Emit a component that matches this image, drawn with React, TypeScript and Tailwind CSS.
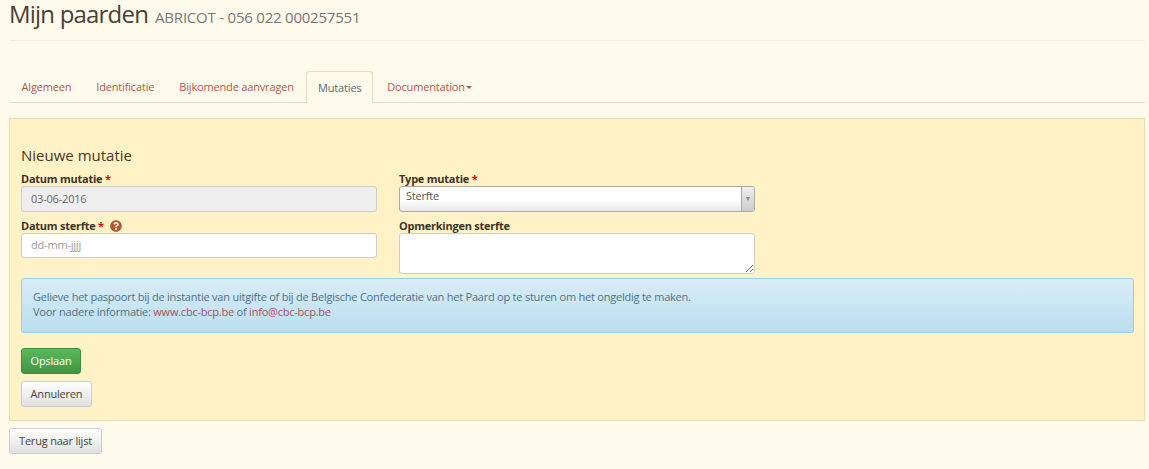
import { FaQuestionCircle } from "react-icons/fa";

const tabs = ["Algemeen", "Identificatie", "Bijkomende aanvragen"];

function Label({ text, required }: { text: string; required?: boolean }) {
  return (
    <span className="text-[11px] leading-[14px] font-bold tracking-[-0.25px] text-[#3d3327]">
      {text}
      {required && <span className="text-[#f00000]"> *</span>}
    </span>
  );
}

export default function App() {
  return (
    <div className="h-[469px] overflow-hidden bg-[#fffbec] pl-[9px] pr-[4px] font-['Open_Sans',sans-serif] tracking-[-0.2px] text-[#555]">
      {/* Header */}
      <div className="h-[41px] border-b border-[#eeeae4] flex items-baseline gap-[7px]">
        <h1 className="text-[24px] leading-[28px] tracking-[-0.8px] font-normal text-[#4a3f35]">Mijn paarden</h1>
        <span className="text-[15px] tracking-[-0.22px] text-[#777]">ABRICOT - 056 022 000257551</span>
      </div>

      {/* Tabs */}
      <div className="mt-[30px] h-[32px] border-b border-[#dfdde0] flex text-[11px] tracking-[-0.17px]">
        {tabs.map((tab) => (
          <span key={tab} className="h-[31px] px-[12.5px] pt-[1px] flex items-center text-[#b5534a]">
            {tab}
          </span>
        ))}
        <span className="h-[32px] w-[67px] pt-[1px] justify-center flex items-center bg-[#fffbec] border border-b-0 border-[#e6dcb8] rounded-t-[3px] text-[#5a6672]">
          Mutaties
        </span>
        <span className="h-[31px] px-[14px] pt-[1px] flex items-center text-[#b5534a]">
          Documentation
          <span className="ml-[1px] mt-[1px] border-x-[3px] border-x-transparent border-t-[3px] border-t-[#b5534a]" />
        </span>
      </div>

      {/* Panel */}
      <div className="mt-[15px] h-[303px] border border-[#ebdcad] bg-[#fff2c6] px-[11px] pt-[27px]">
        <h3 className="text-[15px] leading-[19px] tracking-normal text-[#4a3528]">Nieuwe mutatie</h3>

        <div className="mt-[7px] flex gap-[22px]">
          <div className="w-[356px] flex flex-col">
            <Label text="Datum mutatie" required />
            <div className="h-[26px] flex items-center rounded-[3px] border border-[#ccc] bg-[#eee] px-[9px] text-[11px] text-[#666]">
              03-06-2016
            </div>
            <div className="mt-[7px] h-[14px] flex items-center">
              <Label text="Datum sterfte" required />
              <FaQuestionCircle size={12} className="ml-[6px] text-[#b0563a]" />
            </div>
            <div className="h-[25px] flex items-center rounded-[3px] border border-[#ccc] bg-white px-[9px] text-[11px] text-[#999]">
              dd-mm-jjjj
            </div>
          </div>
          <div className="w-[356px] flex flex-col">
            <Label text="Type mutatie" required />
            <div className="h-[26px] flex rounded-[3px] border border-[#aaa] bg-gradient-to-b from-white from-50% to-[#e8e8e8] text-[11px] text-[#555] overflow-hidden">
              <span className="flex-1 pl-[6px] pt-[1px] leading-[15px]">Sterfte</span>
              <span className="w-[13px] flex items-center justify-center border-l border-[#aaa] bg-gradient-to-b from-[#eee] to-[#ccc]">
                <span className="border-x-[2.5px] border-x-transparent border-t-[4px] border-t-[#888]" />
              </span>
            </div>
            <div className="mt-[7px] h-[14px] flex items-center">
              <Label text="Opmerkingen sterfte" />
            </div>
            <textarea className="h-[41px] rounded-[3px] border border-[#ccc] bg-white" />
          </div>
        </div>

        <div className="mt-[4px] h-[55px] w-[1113px] rounded-[3px] border border-[#9acfea] bg-gradient-to-b from-[#d9edf7] to-[#b9def0] px-[11px] pt-[10px] text-[11px] leading-[15px] tracking-[-0.225px] text-[#4f7186]">
          <p>Gelieve het paspoort bij de instantie van uitgifte of bij de Belgische Confederatie van het Paard op te sturen om het ongeldig te maken.</p>
          <p>
            Voor nadere informatie: <a className="text-[#a8505a]">www.cbc-bcp.be</a> of{" "}
            <a className="text-[#a8505a]">info@cbc-bcp.be</a>
          </p>
        </div>

        <button className="mt-[15px] block h-[26px] w-[60px] rounded-[3px] border border-[#3e8f3e] bg-gradient-to-b from-[#5cb85c] to-[#419641] text-[11px] text-white">
          Opslaan
        </button>
        <button className="mt-[7px] block h-[26px] w-[71px] rounded-[3px] border border-[#ccc] bg-gradient-to-b from-white to-[#e0e0e0] text-[11px] text-[#444]">
          Annuleren
        </button>
      </div>

      <button className="mt-[7px] block h-[26px] w-[93px] rounded-[3px] border border-[#ccc] bg-gradient-to-b from-white to-[#e0e0e0] text-[11px] text-[#444]">
        Terug naar lijst
      </button>
    </div>
  );
}
